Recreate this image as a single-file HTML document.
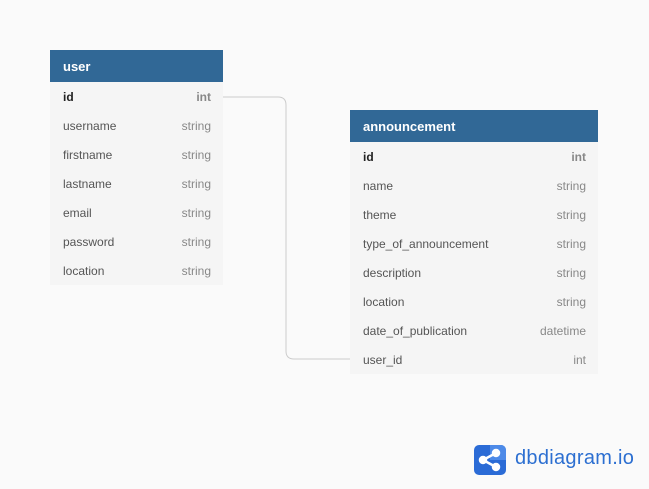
<!DOCTYPE html>
<html><head><style>
body{margin:0;width:649px;height:489px;background:#fafafa;font-family:"Liberation Sans",sans-serif;position:relative;overflow:hidden}
.t{position:absolute;background:#f5f5f5}
.h{height:32px;background:#316896;color:#fff;font-weight:bold;font-size:13px;line-height:34px;padding-left:13px}
.r{height:29px;line-height:31px;font-size:12px;color:#555;padding:0 12px 0 13px;display:flex;justify-content:space-between}
.r span:last-child{color:#888}
.r.b span:first-child{color:#222;font-weight:bold}
.r.b span:last-child{font-weight:bold}
</style></head><body>
<svg style="position:absolute;left:0;top:0" width="649" height="489"><path d="M223 97 H278 Q286 97 286 105 V351 Q286 359 294 359 H350" fill="none" stroke="#ccc" stroke-width="1"/></svg>
<div class="t" style="left:50px;top:50px;width:173px">
<div class="h">user</div>
<div class="r b"><span>id</span><span>int</span></div>
<div class="r"><span>username</span><span>string</span></div>
<div class="r"><span>firstname</span><span>string</span></div>
<div class="r"><span>lastname</span><span>string</span></div>
<div class="r"><span>email</span><span>string</span></div>
<div class="r"><span>password</span><span>string</span></div>
<div class="r"><span>location</span><span>string</span></div>
</div>
<div class="t" style="left:350px;top:110px;width:248px">
<div class="h">announcement</div>
<div class="r b"><span>id</span><span>int</span></div>
<div class="r"><span>name</span><span>string</span></div>
<div class="r"><span>theme</span><span>string</span></div>
<div class="r"><span>type_of_announcement</span><span>string</span></div>
<div class="r"><span>description</span><span>string</span></div>
<div class="r"><span>location</span><span>string</span></div>
<div class="r"><span>date_of_publication</span><span>datetime</span></div>
<div class="r"><span>user_id</span><span>int</span></div>
</div>
<svg style="position:absolute;left:474px;top:445px" width="32" height="30" viewBox="0 0 32 30">
<rect width="32" height="30" rx="5" fill="#2b6bd6"/>
<path d="M16 0 H27 A5 5 0 0 1 32 5 V15 H16Z" fill="#4d8ae8"/>
<g stroke="#fff" stroke-width="2.5" fill="#fff"><line x1="9" y1="15" x2="22" y2="8"/><line x1="9" y1="15" x2="22" y2="22"/><circle cx="9" cy="15" r="3"/><circle cx="22" cy="8" r="3"/><circle cx="22" cy="22" r="3"/></g>
</svg>
<div style="position:absolute;left:515px;top:447px;font-size:20px;color:#2c6fd1;letter-spacing:0.3px">dbdiagram.io</div>
</body></html>
